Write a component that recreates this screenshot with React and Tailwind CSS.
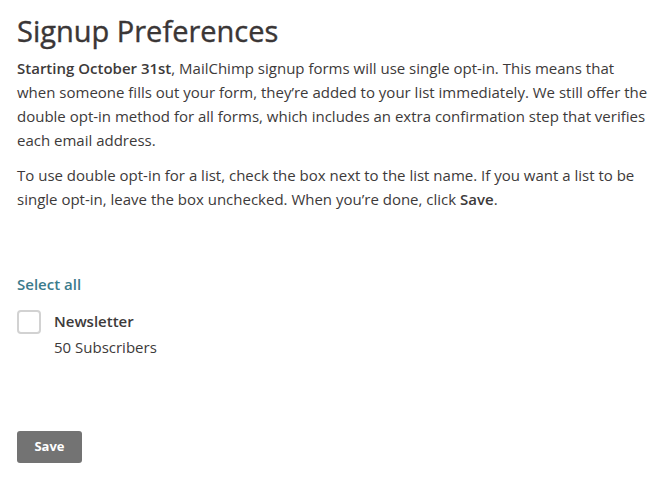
export default function App() {
  return (
    <div className="min-h-screen bg-white pl-[17px] pr-2 pt-[13px] text-[#3d3a3a]" style={{ fontFamily: '"Open Sans", sans-serif' }}>
      <h1 className="text-[29px] leading-[36px] font-normal text-[#3a3636] [-webkit-text-stroke:0.4px_#3a3636]">Signup Preferences</h1>
      <p className="mt-[7px] text-[15px] leading-[24px] w-[636px]">
        <span className="font-semibold">Starting October 31st</span>, MailChimp signup forms will use single opt-in. This means that when someone fills out your form, they’re added to your list immediately. We still offer the double opt-in method for all forms, which includes an extra confirmation step that verifies each email address.
      </p>
      <p className="mt-[11px] text-[15px] leading-[24px] w-[636px]">
        To use double opt-in for a list, check the box next to the list name. If you want a list to be single opt-in, leave the box unchecked. When you’re done, click <span className="font-semibold">Save</span>.
      </p>

      <div className="mt-[61px] text-[15px] leading-[24px] font-semibold text-[#3b7b8c]">Select all</div>

      <div className="mt-[13px] flex gap-3">
        <div className="mt-px h-6 w-6 rounded-[4px] border-2 border-[#d2d2d2] bg-white" />
        <div className="pl-px">
          <div className="text-[15px] leading-[24px] font-semibold">Newsletter</div>
          <div className="mt-[2px] text-[15px] leading-[24px]">50 Subscribers</div>
        </div>
      </div>

      <button className="mt-[72px] h-8 w-[65px] rounded-[3px] bg-[#737373] text-[13px] font-bold text-white">Save</button>
    </div>
  );
}
